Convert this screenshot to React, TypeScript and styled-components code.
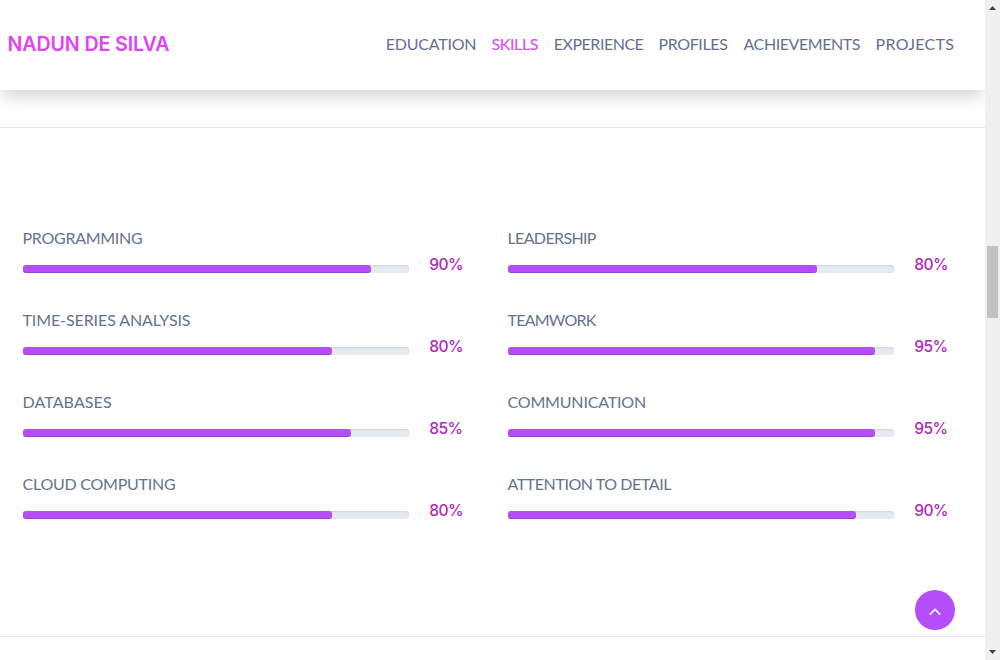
import React from 'react';
import styled, { createGlobalStyle } from 'styled-components';

const GlobalStyle = createGlobalStyle`
  * { box-sizing: border-box; }
  body { margin: 0; overflow: hidden; background: #fefefe; font-family: Lato, sans-serif; font-size: 16px; }
`;

const Page = styled.div`
  display: flex;
  width: 1000px;
  height: 660px;
`;

const Content = styled.div`
  display: flex;
  flex-direction: column;
  position: relative;
  width: 985px;
  overflow: hidden;
`;

const Header = styled.header`
  display: flex;
  flex: 0 0 90px;
  align-items: center;
  justify-content: space-between;
  padding: 0 29.5px 0 7.5px;
  background: #fff;
  box-shadow: 0 9px 15px -3px rgba(0, 0, 0, 0.17);
  z-index: 1;
`;

const Brand = styled.a`
  padding-bottom: 3px;
  color: #e142f5;
  font-family: Inter, sans-serif;
  font-size: 19.6px;
  font-weight: 600;
  letter-spacing: -0.1px;
  line-height: 30px;
`;

const Nav = styled.nav`
  display: flex;
  padding-bottom: 2px;
  line-height: 24px;
`;

const NavLink = styled.a<{ $slot: number; $spacing: number; $active?: boolean }>`
  width: ${p => p.$slot}px;
  color: ${p => (p.$active ? '#e142f5' : '#64708f')};
  letter-spacing: ${p => p.$spacing}px;
  white-space: nowrap;
`;

const Spacer = styled.div`
  flex: 0 0 37px;
`;

const SkillsSection = styled.section`
  display: grid;
  flex: 0 0 510px;
  grid-template-columns: 485px 485px;
  align-content: start;
  padding: 98px 0 0 22.5px;
  border-top: 1px solid #e2e8f0;
  border-bottom: 1px solid #e2e8f0;
`;

const SkillColumn = styled.div`
  display: flex;
  flex-direction: column;
`;

const Skill = styled.div`
  height: 82px;
`;

const SkillName = styled.div<{ $spacing: number }>`
  height: 25px;
  color: #64748b;
  letter-spacing: ${p => p.$spacing}px;
  line-height: 24px;
`;

const Meter = styled.div`
  display: flex;
  align-items: center;
  height: 28px;
`;

const Track = styled.div`
  width: 386px;
  height: 8px;
  margin: 8px 20.3px 0 0.5px;
  border-radius: 3px;
  background: #e4ebf3;
  box-shadow: inset 0 1px 2px rgba(0, 0, 0, 0.1);
`;

const Fill = styled.div`
  height: 8px;
  border-radius: 3px;
  background: #b54dfb;
  box-shadow: inset 0 -1px 0 rgba(0, 0, 0, 0.15);
`;

const Percent = styled.span`
  color: #b02abb;
  font-family: Inter, sans-serif;
  font-size: 15.6px;
  font-weight: 500;
  letter-spacing: -0.6px;
  line-height: 24px;
`;

const ToTop = styled.button`
  display: flex;
  position: absolute;
  right: 30px;
  bottom: 30px;
  align-items: center;
  justify-content: center;
  width: 40px;
  height: 40px;
  padding: 4px 0 0;
  border: 0;
  border-radius: 50%;
  background: #b54dfb;
`;

const Scrollbar = styled.div`
  display: flex;
  flex-direction: column;
  align-items: center;
  justify-content: space-between;
  width: 15px;
  padding: 6px 0 6px;
  background: #f0f0f0;
`;

const Thumb = styled.div`
  width: 11px;
  height: 72px;
  margin-top: 236px;
  margin-bottom: auto;
  background: #c1c1c1;
`;

const Arrow = styled.svg`
  display: block;
  width: 7px;
  height: 4px;
`;

const links = [
  { label: 'EDUCATION', slot: 105.7, spacing: -0.22 },
  { label: 'SKILLS', slot: 62.3, spacing: -0.4, active: true },
  { label: 'EXPERIENCE', slot: 104.7, spacing: -0.48 },
  { label: 'PROFILES', slot: 85, spacing: -0.38 },
  { label: 'ACHIEVEMENTS', slot: 132, spacing: -0.42 },
  { label: 'PROJECTS', slot: 80, spacing: 0.32 },
];

const columns = [
  [
    { name: 'PROGRAMMING', value: 90, spacing: -0.28 },
    { name: 'TIME-SERIES ANALYSIS', value: 80, spacing: -0.1 },
    { name: 'DATABASES', value: 85, spacing: 0.1 },
    { name: 'CLOUD COMPUTING', value: 80, spacing: -0.24 },
  ],
  [
    { name: 'LEADERSHIP', value: 80, spacing: -0.64 },
    { name: 'TEAMWORK', value: 95, spacing: -0.78 },
    { name: 'COMMUNICATION', value: 95, spacing: -0.18 },
    { name: 'ATTENTION TO DETAIL', value: 90, spacing: -0.43 },
  ],
];

export default function App() {
  return (
    <>
      <GlobalStyle />
      <Page>
        <Content>
          <Header>
            <Brand>NADUN DE SILVA</Brand>
            <Nav>
              {links.map(l => (
                <NavLink key={l.label} $slot={l.slot} $spacing={l.spacing} $active={l.active}>
                  {l.label}
                </NavLink>
              ))}
            </Nav>
          </Header>
          <Spacer />
          <SkillsSection>
            {columns.map((skills, i) => (
              <SkillColumn key={i}>
                {skills.map(s => (
                  <Skill key={s.name}>
                    <SkillName $spacing={s.spacing}>{s.name}</SkillName>
                    <Meter>
                      <Track>
                        <Fill style={{ width: `calc(${s.value}% + 0.3px)` }} />
                      </Track>
                      <Percent>{s.value}%</Percent>
                    </Meter>
                  </Skill>
                ))}
              </SkillColumn>
            ))}
          </SkillsSection>
          <ToTop aria-label="Back to top">
            <svg width="12" height="8" viewBox="0 0 12 8" fill="none" stroke="#fff" strokeWidth="1.5">
              <path d="M0.8 6.6 L6 1.4 L11.2 6.6" />
            </svg>
          </ToTop>
        </Content>
        <Scrollbar>
          <Arrow viewBox="0 0 7 4"><path d="M0 4 L3.5 0 L7 4Z" fill="#404040" /></Arrow>
          <Thumb />
          <Arrow viewBox="0 0 7 4"><path d="M0 0 L3.5 4 L7 0Z" fill="#404040" /></Arrow>
        </Scrollbar>
      </Page>
    </>
  );
}
